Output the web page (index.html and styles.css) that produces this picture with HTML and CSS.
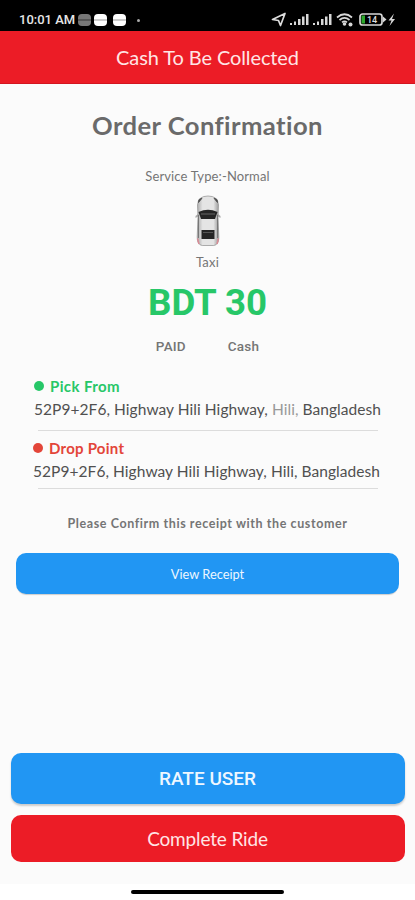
FILE: index.html
```html
<!DOCTYPE html>
<html lang="en">
<head>
<meta charset="utf-8">
<title>Cash To Be Collected</title>
<link rel="stylesheet" href="styles.css">
</head>
<body>
<div class="screen">
  <div class="status">
    <span class="clock">10:01 AM</span>
    <span class="chip dim"></span><span class="chip"></span><span class="chip last"></span><span class="dot"></span>
    <svg class="tray" width="130" height="16" viewBox="0 0 130 16">
      <path d="M1.500 7.500 14 1.500 9.500 13.500 7.500 8.500Z" fill="none" stroke="#ddd" stroke-width="1.700" stroke-linejoin="round"/>
      <g fill="#d8d8d8">
        <path d="M19 11h2v2h-2zM23 9.500h2v3.500h-2zM27 7h2.500v6h-2.500zM31 4.500h2.500v8.500h-2.500zM35 2h2.500v11h-2.500z"/>
        <path d="M42 11h2v2h-2zM46 9.500h2v3.500h-2zM50 7h2.500v6h-2.500zM54 4.500h2.500v8.500h-2.500zM58 2h2.500v11h-2.500z"/>
        <circle cx="73.500" cy="12" r="1.800"/>
        <circle cx="79.500" cy="12.500" r="2"/>
        <path d="M123 1.500 117.500 8.500h3l-2 5.500 5.500-7h-3z"/>
      </g>
      <g fill="none" stroke="#d8d8d8" stroke-width="1.700">
        <path d="M66 5.500q7.500-6.500 15 0M68.500 8q5-4.300 10 0M71 10.300q2.500-2 5 0"/>
        <rect x="89" y="2" width="22" height="11" rx="2.500"/>
      </g>
      <path d="M112 4.500 115.500 7.500 112 10.500z" fill="#d8d8d8"/>
      <path d="M90.500 3.500h3.500v8h-3.500z" fill="#2ca82c"/>
      <text x="101" y="11" class="charge">14</text>
    </svg>
  </div>
  <header class="bar"><span>Cash To Be Collected</span></header>
  <main class="content">
    <h1 class="row heading"><span>Order Confirmation</span></h1>
    <div class="row service"><span>Service Type:-Normal</span></div>
    <svg class="car" width="26" height="52" viewBox="0 0 26 52">
      <defs><linearGradient id="body"><stop offset="0" stop-color="#aaa"/><stop offset=".25" stop-color="#e4e4e4"/><stop offset=".75" stop-color="#e4e4e4"/><stop offset="1" stop-color="#999"/></linearGradient></defs>
      <path d="M3 19 .5 21v2L3 21.500zM23 19l2.500 2v2L23 21.500z" fill="#aaa"/>
      <path d="M2.500 10Q3 1 13 1t10.500 9L23 22l.8 20q0 8-5 8.500H7.200q-5-.5-5-8.500L3 22z" fill="url(#body)" stroke="#999" stroke-width=".8"/>
      <path d="M3.500 7.500 7 3.200 4 4.500zM22.500 7.500 19 3.200 22 4.500z" fill="#444" stroke="#555"/>
      <path d="M3.500 17q9.500-4.500 19 0l-2.500 7H6z" fill="#252525"/>
      <path d="M6 19h14" stroke="#666"/>
      <path d="M3.500 20v23M22.500 20v23" stroke="#777"/>
      <path d="M6.500 35h13v9h-13z" fill="#252525"/>
      <path d="M8 37.500h10" stroke="#555"/>
      <path d="M2.500 43.500 4 49M23.500 43.500 22 49" stroke="#d98b95" stroke-width="1.500"/>
    </svg>
    <div class="row taxi"><span>Taxi</span></div>
    <div class="row fare"><span>BDT 30</span></div>
    <div class="row payment"><span>PAID</span><span>Cash</span></div>
    <section class="stop pick">
      <div class="label"><i></i><span>Pick From</span></div>
      <div class="address">52P9+2F6, Highway Hili Highway, <span class="faded">Hili,</span> Bangladesh</div>
    </section>
    <section class="stop drop">
      <div class="label"><i></i><span>Drop Point</span></div>
      <div class="address">52P9+2F6, Highway Hili Highway, Hili, Bangladesh</div>
    </section>
    <div class="row note"><span>Please Confirm this receipt with the customer</span></div>
    <button class="btn receipt"><span>View Receipt</span></button>
    <div class="actions">
      <button class="btn rate"><span>RATE USER</span></button>
      <button class="btn complete"><span>Complete Ride</span></button>
    </div>
  </main>
  <div class="nav"><div class="pill"></div></div>
</div>
</body>
</html>
```
FILE: styles.css
```css
* { box-sizing: border-box; }
body { margin: 0; font-family: Lato, sans-serif; font-variant-ligatures: none; }
.screen { width: 415px; height: 900px; display: flex; flex-direction: column; background: #fbfbfb; overflow: hidden; }
.status { height: 31px; flex: none; background: #000; display: flex; align-items: center; padding: 9px 14px 0 19px; }
.clock { font: 500 13px/16px Roboto, sans-serif; color: #e6e6e6; width: 59px; white-space: nowrap; }
.chip { width: 13px; height: 12px; border-radius: 4px; background: linear-gradient(#fff 45%, #ccc 45%, #ccc 57%, #fff 57%); margin-right: 3px; }
.chip.dim { background: linear-gradient(#777 45%, #555 45%, #555 57%, #777 57%); }
.chip.last { margin: 0 11px 0 3px; }
.dot { width: 3px; height: 3px; border-radius: 50%; background: #aaa; }
.tray { margin-left: auto; }
.charge { font: 500 9px Roboto, sans-serif; fill: #ddd; text-anchor: middle; }
.bar { height: 53px; flex: none; background: #ec1c26; border-bottom: 1px solid #d31520; color: #ffe5e5; display: flex; align-items: center; justify-content: center; font-size: 20px; letter-spacing: -.1px; }
.content { flex: 1; display: flex; flex-direction: column; align-items: center; }
.row { display: flex; justify-content: center; align-items: center; white-space: nowrap; flex: none; color: #757575; }
.heading { margin: 25px 0 0; height: 32px; font-size: 25.6px; letter-spacing: .42px; font-weight: 700; color: #6a6a6a; }
.service { margin-top: 25px; height: 20px; font-size: 13px; letter-spacing: .13px; }
.car { margin-top: 9px; flex: none; }
.taxi { margin-top: 5px; height: 20px; font-size: 13px; letter-spacing: .2px; }
.fare { margin-top: 9px; height: 42px; font: 700 36.7px Roboto, sans-serif; color: #27c768; }
.payment { margin-top: 13px; height: 20px; gap: 42px; font: 500 13.5px Roboto, sans-serif; letter-spacing: .2px; }
.stop { align-self: flex-start; margin-left: 34px; flex: none; width: 345px; background: linear-gradient(#dcdcdc, #dcdcdc) 4px 100% / 340px 1px no-repeat; white-space: nowrap; }
.pick { margin-top: 20px; height: 55px; }
.drop { height: 58px; padding-top: 7px; margin-left: 33px; background-position-x: 5px; }
.label { display: flex; align-items: center; height: 20px; gap: 6px; font-weight: 700; font-size: 15px; letter-spacing: .4px; }
.label i { width: 10px; height: 10px; border-radius: 50%; background: currentColor; }
.pick .label { color: #27c768; }
.drop .label { color: #e34539; letter-spacing: .25px; }
.address { height: 24px; line-height: 26px; font-size: 15.5px; letter-spacing: .055px; color: #505050; }
.faded { color: #999; }
.note { margin-top: 24px; height: 20px; font-size: 12.5px; letter-spacing: .59px; font-weight: 700; }
.btn { border: 0; padding: 0; flex: none; display: flex; align-items: center; justify-content: center; border-radius: 10px; color: #eef7ff; font-family: Lato, sans-serif; background: #2196f3; }
.receipt { width: 383px; height: 41px; margin-top: 20px; font-size: 12.8px; box-shadow: 0 2px 1px -1px #ccc; }
.actions { margin-top: auto; margin-bottom: 22px; display: flex; flex-direction: column; gap: 11px; }
.rate { width: 394px; height: 51px; font: 500 19px Roboto, sans-serif; box-shadow: 0 2px 2px #ccc; }
.complete { width: 394px; height: 47px; font-size: 19px; letter-spacing: -.15px; background: #ec1c26; color: #ffe5e5; }
.nav { height: 16px; flex: none; background: #fff; display: flex; justify-content: center; padding-top: 6px; }
.pill { width: 153px; height: 4px; border-radius: 2px; background: #000; }
```
